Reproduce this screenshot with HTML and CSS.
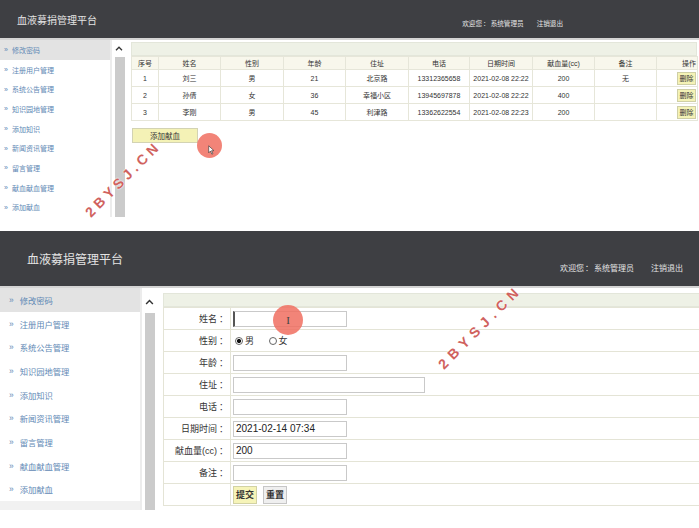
FILE: index.html
```html
<!DOCTYPE html>
<html lang="zh-CN">
<head>
  <meta charset="UTF-8" />
  <title>血液募捐管理平台</title>
  <link rel="stylesheet" href="styles.css">
</head>
<body>
  <!-- List screen -->
  <div class="shot shot-list">
    <header class="topbar">
      <div class="brand">血液募捐管理平台</div>
      <div class="user">欢迎您<span class="colon">：</span>系统管理员<span class="logout">注销退出</span></div>
    </header>
    <div class="frame">
      <ul class="menu">
        <li class="active">» <span>修改密码</span></li>
        <li>» <span>注册用户管理</span></li>
        <li>» <span>系统公告管理</span></li>
        <li>» <span>知识园地管理</span></li>
        <li>» <span>添加知识</span></li>
        <li>» <span>新闻资讯管理</span></li>
        <li>» <span>留言管理</span></li>
        <li>» <span>献血献血管理</span></li>
        <li>» <span>添加献血</span></li>
      </ul>
      <div class="scroll">
        <svg class="arrow" viewBox="0 0 8 5"><path d="M1 4.2 L4 1.2 L7 4.2" fill="none" stroke="#333" stroke-width="1.3"/></svg>
        <div class="thumb"></div>
      </div>
      <div class="main">
        <div class="bar"></div>
        <table class="grid">
          <colgroup>
            <col class="w27"><col class="w62"><col class="w63"><col class="w62"><col class="w63">
            <col class="w61"><col class="w63"><col class="w62"><col class="w62"><col class="w41">
          </colgroup>
          <tr class="head">
            <th>序号</th><th>姓名</th><th>性别</th><th>年龄</th><th>住址</th>
            <th>电话</th><th>日期时间</th><th>献血量(cc)</th><th>备注</th><th class="op">操作</th>
          </tr>
          <tr>
            <td>1</td><td>刘三</td><td>男</td><td>21</td><td>北京路</td>
            <td>13312365658</td><td>2021-02-08 22:22</td><td>200</td><td>无</td>
            <td class="op"><button class="del">删除</button></td>
          </tr>
          <tr>
            <td>2</td><td>孙倩</td><td>女</td><td>36</td><td>幸福小区</td>
            <td>13945697878</td><td>2021-02-08 22:22</td><td>400</td><td></td>
            <td class="op"><button class="del">删除</button></td>
          </tr>
          <tr>
            <td>3</td><td>李刚</td><td>男</td><td>45</td><td>利津路</td>
            <td>13362622554</td><td>2021-02-08 22:23</td><td>200</td><td></td>
            <td class="op"><button class="del">删除</button></td>
          </tr>
        </table>
        <button class="add">添加献血</button>
      </div>
    </div>
    <div class="click click-list"><svg viewBox="0 0 10 14"><path d="M1 1 L1 11 L3.5 8.5 L5.5 13 L7 12.3 L5 8 L8.5 8 Z" fill="#fff" stroke="#333" stroke-width="0.9"/></svg></div>
    <div class="mark mark-list">2BYSJ.CN</div>
  </div>

  <!-- Add form screen -->
  <div class="shot shot-form">
    <header class="topbar">
      <div class="brand">血液募捐管理平台</div>
      <div class="user">欢迎您<span class="colon">：</span>系统管理员<span class="logout">注销退出</span></div>
    </header>
    <div class="frame">
      <div class="side">
        <ul class="menu">
          <li class="active">» <span>修改密码</span></li>
          <li>» <span>注册用户管理</span></li>
          <li>» <span>系统公告管理</span></li>
          <li>» <span>知识园地管理</span></li>
          <li>» <span>添加知识</span></li>
          <li>» <span>新闻资讯管理</span></li>
          <li>» <span>留言管理</span></li>
          <li>» <span>献血献血管理</span></li>
          <li>» <span>添加献血</span></li>
        </ul>
        <div class="menu-end"></div>
      </div>
      <div class="scroll">
        <svg class="arrow" viewBox="0 0 8 5"><path d="M1 4.2 L4 1.2 L7 4.2" fill="none" stroke="#333" stroke-width="1.3"/></svg>
        <div class="thumb"></div>
      </div>
      <div class="main">
        <div class="bar"></div>
        <table class="form">
          <tr><td class="label">姓名<span class="colon">：</span></td><td><input class="field caret" type="text"></td></tr>
          <tr>
            <td class="label">性别<span class="colon">：</span></td>
            <td class="radios">
              <span class="radio on"></span>男
              <span class="radio"></span>女
            </td>
          </tr>
          <tr><td class="label">年龄<span class="colon">：</span></td><td><input class="field" type="text"></td></tr>
          <tr><td class="label">住址<span class="colon">：</span></td><td><input class="field wide" type="text"></td></tr>
          <tr><td class="label">电话<span class="colon">：</span></td><td><input class="field" type="text"></td></tr>
          <tr><td class="label">日期时间<span class="colon">：</span></td><td><input class="field" type="text" value="2021-02-14 07:34"></td></tr>
          <tr><td class="label">献血量(cc)<span class="colon">：</span></td><td><input class="field" type="text" value="200"></td></tr>
          <tr><td class="label">备注<span class="colon">：</span></td><td><input class="field" type="text"></td></tr>
          <tr>
            <td class="label"></td>
            <td><button class="btn submit">提交</button><button class="btn reset">重置</button></td>
          </tr>
        </table>
      </div>
    </div>
    <div class="click click-form"><span>I</span></div>
    <div class="mark mark-form">2BYSJ.CN</div>
  </div>
</body>
</html>
```

FILE: styles.css
```css
body {
  margin: 0;
  width: 699px;
  background: #fff;
  font-family: "Liberation Sans", "Noto Sans CJK SC", sans-serif;
  color: #333;
}

.shot { position: relative; }

ul { list-style: none; margin: 0; padding: 0; }

.colon { font-family: "Noto Sans CJK TC", sans-serif; margin-left: 2px; }

.topbar {
  display: flex;
  align-items: center;
  background: #3e3f43;
  color: #e4e4e4;
  border-bottom: 2px solid #d4d4d4;
}

.topbar .user { margin-left: auto; }
.topbar .colon { margin: 0 1px; }

.frame { display: flex; }

.menu li {
  display: flex;
  align-items: center;
  color: #6189b5;
}

.menu li.active { background: #e3e3e3; }

.scroll {
  display: flex;
  flex-direction: column;
  align-items: center;
  border-left: 2px solid #ececec;
  background: #fff;
}

.thumb {
  flex: 1;
  align-self: stretch;
  background: #cbcbcb;
}

.bar {
  background: #eef1e6;
  border: 1px solid #e3e6da;
}

/* ---------- list screen ---------- */

.shot-list { height: 218px; }

.shot-list .topbar { height: 38px; padding-left: 17px; }
.shot-list .brand { font-size: 10px; }
.shot-list .user { font-size: 6.6px; margin-top: 8px; padding-right: 136px; }
.shot-list .logout { margin-left: 13px; }

.shot-list .frame { height: 177px; }

.shot-list .menu { width: 110px; }
.shot-list .menu li { height: 19.7px; padding-left: 4px; font-size: 7px; }
.shot-list .menu li span { margin-left: 4px; }

.shot-list .scroll { width: 12px; padding-left: 1px; margin-right: 6px; }
.shot-list .arrow { width: 8px; height: 5px; margin: 6px 0 6px; }
.shot-list .thumb { margin-left: 2px; }

.shot-list .main { width: 566px; padding-top: 2px; }
.shot-list .bar { height: 12px; }

.grid {
  width: 566px;
  border-collapse: collapse;
  table-layout: fixed;
  font-size: 7px;
}

.grid th, .grid td {
  border: 1px solid #e6e6d9;
  text-align: center;
  padding: 0;
  font-weight: normal;
  white-space: nowrap;
}

.grid .head th { height: 12px; background: #f8f7ec; }
.grid td { height: 16px; }
.grid .op { text-align: right; padding-right: 1px; }

.w27 { width: 27px; } .w41 { width: 41px; } .w61 { width: 61px; }
.w62 { width: 62px; } .w63 { width: 63px; }

.del {
  font: inherit;
  font-size: 7px;
  width: 19px;
  height: 13px;
  padding: 0;
  background: #f4f2b6;
  border: 1px solid #cfcfa6;
  color: #333;
}

.add {
  margin: 7px 0 0 1px;
  width: 66px;
  height: 15px;
  padding: 0;
  font: inherit;
  font-size: 7.5px;
  background: #f4f2b6;
  border: 1px solid #d3d3b3;
  color: #333;
}

/* ---------- form screen ---------- */

.shot-form { margin-top: 13px; height: 284px; }

.shot-form .topbar { height: 55px; padding-left: 27px; }
.shot-form .brand { font-size: 12px; }
.shot-form .user { font-size: 8px; margin-top: 17px; padding-right: 16px; }
.shot-form .logout { margin-left: 17px; }

.shot-form .frame { height: 222px; }

.side { width: 140px; display: flex; flex-direction: column; }
.shot-form .menu li { height: 23.7px; padding-left: 9px; font-size: 8.3px; }
.shot-form .menu li span { margin-left: 6px; }
.menu-end { height: 9px; background: #f1f1f1; margin-top: auto; }

.shot-form .scroll { width: 12px; padding-left: 1px; margin-right: 8px; border-left-width: 2px; }
.shot-form .arrow { width: 9px; height: 6px; margin: 11px 0 8px; }
.shot-form .thumb { margin: 0 0 0 2px; }

.shot-form .main { flex: 1; padding-top: 5px; }
.shot-form .bar { height: 12px; border-right: none; }

.form {
  width: 100%;
  border-collapse: collapse;
  font-size: 9px;
}

.form td {
  border-top: 1px solid #e4e4d6;
  border-bottom: 1px solid #e4e4d6;
  height: 21px;
  padding: 0 0 0 2px;
}

.form td.label {
  width: 64px;
  text-align: right;
  padding: 0 2px 0 0;
  border-left: 1px solid #e4e4d6;
  border-right: 1px solid #e4e4d6;
}

.field {
  box-sizing: border-box;
  width: 114px;
  height: 16px;
  padding: 0 2px;
  border: 1px solid #c9c9c9;
  font-family: "Liberation Sans", sans-serif;
  font-size: 10px;
  color: #222;
  display: block;
}

.field.wide { width: 192px; }
.field.caret { border-left: 2px solid #555; }

.radios { font-size: 9px; }

.radio {
  display: inline-block;
  box-sizing: border-box;
  width: 8px;
  height: 8px;
  border: 1px solid #666;
  border-radius: 50%;
  vertical-align: -1px;
  margin: 0 2px 0 2px;
  background: #fff;
}

.radio + .radio, .radios .radio:last-child { margin-left: 12px; }

.radio.on { background: radial-gradient(circle, #111 0 2px, #fff 2.2px); }

.btn {
  height: 18px;
  width: 24px;
  padding: 0;
  font-family: "Noto Sans CJK SC", sans-serif;
  font-size: 9px;
  font-weight: bold;
  color: #333;
  border: 1px solid #c6c6c6;
  margin-right: 6px;
  vertical-align: middle;
}

.submit { background: #f6f4b8; border-color: #d2d2a4; }
.reset { background: #efefef; }

/* ---------- screenshot overlays ---------- */

.click {
  position: absolute;
  border-radius: 50%;
  background: rgba(240, 110, 96, 0.85);
  display: flex;
  align-items: center;
  justify-content: center;
}

.click-list { left: 197px; top: 133px; width: 25px; height: 25px; }
.click-list svg { width: 7px; height: 10px; margin: 8px 0 0 3px; }

.click-form { left: 273px; top: 74px; width: 30px; height: 30px; }
.click-form span { font-family: "Liberation Serif", serif; font-size: 11px; color: #444; }

.mark {
  position: absolute;
  font-family: "Liberation Sans", sans-serif;
  font-weight: bold;
  font-size: 14px;
  letter-spacing: 4px;
  color: #d0625e;
  text-shadow: 0 0 2px #fff, 0 0 1px #fff;
  transform: rotate(-45deg);
  transform-origin: left bottom;
  white-space: nowrap;
}

.mark-list { left: 93px; top: 204px; }
.mark-form { left: 446px; top: 125px; letter-spacing: 5.5px; }
```
